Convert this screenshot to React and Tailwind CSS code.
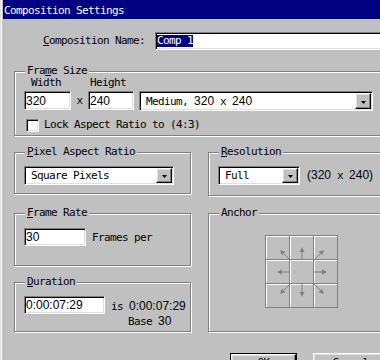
import React from "react";

/* Composition Settings – Win9x style dialog */
const MONO = "font-['DejaVu_Sans_Mono',monospace] text-[11px] tracking-[-0.62px]";
const SANS = "font-['Liberation_Sans',Arial,sans-serif] text-[12px] tracking-normal";
const SUNKEN = "bg-white border border-t-[#808080] border-l-[#808080] border-b-white border-r-white shadow-[inset_1px_1px_0_#000,inset_-1px_-1px_0_#dfdfdf]";
const RAISED = "bg-[#c0c0c0] border border-t-white border-l-white border-b-black border-r-black shadow-[inset_-1px_-1px_0_#808080,inset_1px_1px_0_#dfdfdf]";

// digits and brackets fall back to a sans face, like the original
function Mix({ text }) {
  return (
    <span className="whitespace-pre">
      {text.split(/([0-9():]+)/).map((part, i) =>
        /^[0-9():]+$/.test(part)
          ? <span key={i} className={SANS}>{part}</span>
          : <span key={i}>{part}</span>
      )}
    </span>
  );
}

function Group({ label, className, children }) {
  return (
    <div className={`relative border border-[#808080] shadow-[inset_1px_1px_0_#fff,1px_1px_0_#fff] ${className}`}>
      <div className="absolute left-[10px] top-[-8px] bg-[#c0c0c0] px-[2px] leading-[14px] whitespace-nowrap">{label}</div>
      {children}
    </div>
  );
}

function DropBtn() {
  return (
    <div className={`w-[16px] flex items-center justify-center ${RAISED}`}>
      <svg width="5" height="3" viewBox="0 0 5 3" className="mt-[2px]"><path d="M0 0h5L2.5 3z" fill="#000" /></svg>
    </div>
  );
}

function Combo({ className, children }) {
  return (
    <div className={`${SUNKEN} flex items-stretch p-[1px] ${className}`}>
      <div className="flex-1 flex items-center pl-[5px] whitespace-nowrap overflow-hidden">
        <span>{children}</span>
      </div>
      <DropBtn />
    </div>
  );
}

function Field({ className, value }) {
  return (
    <div className={`${SUNKEN} flex items-center pl-[1px] ${className}`}>
      <span className={SANS}>{value}</span>
    </div>
  );
}

function Arrow({ x1, y1, x2, y2 }) {
  const dx = x2 - x1, dy = y2 - y1;
  const len = Math.hypot(dx, dy);
  const ux = dx / len, uy = dy / len;
  const bx = x2 - ux * 5, by = y2 - uy * 5;
  const pts = `${x2},${y2} ${bx - uy * 2.5},${by + ux * 2.5} ${bx + uy * 2.5},${by - ux * 2.5}`;
  return (
    <g>
      <line x1={x1} y1={y1} x2={bx} y2={by} stroke="#808080" strokeWidth="1" />
      <polygon points={pts} fill="#808080" />
    </g>
  );
}

function AnchorGrid() {
  const arrows = [
    [36, 24, 36, 11], [36, 48, 36, 61], [24, 36, 11, 36], [48, 36, 61, 36],
    [24, 24, 14, 14], [48, 24, 58, 14], [24, 48, 14, 58], [48, 48, 58, 58],
  ];
  return (
    <div className="relative w-[73px] h-[73px] border-l border-t border-[#808080] grid grid-cols-3 grid-rows-3">
      {Array.from({ length: 9 }).map((_, i) => (
        <div key={i} className="border-r border-b border-[#808080] shadow-[inset_1px_1px_0_#fff]" />
      ))}
      <svg className="absolute inset-0" width="72" height="72" viewBox="0 0 72 72">
        {arrows.map((a, i) => <Arrow key={i} x1={a[0]} y1={a[1]} x2={a[2]} y2={a[3]} />)}
      </svg>
    </div>
  );
}

export default function App() {
  return (
    <div className={`w-[380px] h-[360px] overflow-hidden bg-[#c0c0c0] text-black shadow-[inset_1px_0_0_#dfdfdf,inset_2px_0_0_#fff] ${MONO}`}>
      <div className="w-[400px] flex flex-col leading-[14px]">
        {/* title bar */}
        <div className="ml-[3px] h-[19px] bg-[#000080] text-white pl-[1px] pt-[2px] flex items-center">
          Composition Settings
        </div>

        {/* name */}
        <div className="flex items-center mt-[13px] pl-[43px] gap-[10px]">
          <div><u>C</u>omposition Name:</div>
          <div className={`${SUNKEN} w-[240px] h-[18px] flex items-center pl-[1px]`}>
            <span className="bg-[#000080] text-white leading-[12px]">Comp 1</span>
          </div>
        </div>

        {/* frame size */}
        <Group label={<>Fra<u>m</u>e Size</>} className="ml-[14px] mt-[21px] h-[65px] w-[380px] pl-[9px]">
          <div className="mt-[4px] flex h-[14px]">
            <div className="w-[64px] pl-[7px]">Width</div>
            <div className="pl-[2px]">Height</div>
          </div>
          <div className="mt-[1px] flex items-start">
            <Field className="w-[47px] h-[19px]" value="320" />
            <div className="w-[17px] h-[19px] flex items-center justify-center">x</div>
            <Field className="w-[46px] h-[19px]" value="240" />
            <Combo className="ml-[5px] w-[234px] h-[20px]"><Mix text="Medium, 320 x 240" /></Combo>
          </div>
          <div className="mt-[7px] flex items-center pl-[2px] gap-[5px]">
            <div className={`${SUNKEN} w-[13px] h-[13px]`} />
            <div>Lock Aspect Ratio to (4:3)</div>
          </div>
        </Group>

        <div className="flex items-start mt-[16px] ml-[14px] gap-[17px]">
          {/* left column */}
          <div className="w-[177px] flex flex-col">
            <Group label={<><u>P</u>ixel Aspect Ratio</>} className="h-[42px] pl-[9px]">
              <Combo className="mt-[13px] w-[150px] h-[19px]">Square Pixels</Combo>
            </Group>

            <Group label={<><u>F</u>rame Rate</>} className="mt-[19px] h-[53px] pl-[9px]">
              <div className="mt-[14px] flex items-center gap-[6px]">
                <Field className="w-[62px] h-[18px]" value="30" />
                <div className="pt-[2px]">Frames per</div>
              </div>
            </Group>

            <Group label={<><u>D</u>uration</>} className="mt-[16px] h-[50px] pl-[9px]">
              <div className="mt-[13px] flex items-start gap-[6px]">
                <Field className="w-[81px] h-[18px]" value="0:00:07:29" />
                <div className="mt-[3px] leading-[15px] flex flex-col">
                  <div><Mix text="is 0:00:07:29" /></div>
                  <div className="pl-[17px]"><Mix text="Base 30" /></div>
                </div>
              </div>
            </Group>
          </div>

          {/* right column */}
          <div className="w-[190px] flex flex-col">
            <Group label={<><u>R</u>esolution</>} className="h-[44px] pl-[9px]">
              <div className="mt-[13px] flex items-center gap-[7px]">
                <Combo className="w-[82px] h-[19px]">Full</Combo>
                <div><Mix text="(320 x 240)" /></div>
              </div>
            </Group>

            <Group label="Anchor" className="mt-[17px] h-[119px] pl-[56px]">
              <div className="mt-[21px]">
                <AnchorGrid />
              </div>
            </Group>
          </div>
        </div>

        {/* buttons */}
        <div className="flex mt-[21px] pl-[230px] gap-[16px]">
          <div className="w-[67px] h-[23px] border border-black">
            <div className={`${RAISED} h-full flex items-start justify-center pt-[1px]`}>OK</div>
          </div>
          <div className={`${RAISED} w-[75px] h-[23px] flex items-start justify-center pt-[2px]`}>Cancel</div>
        </div>
      </div>
    </div>
  );
}
